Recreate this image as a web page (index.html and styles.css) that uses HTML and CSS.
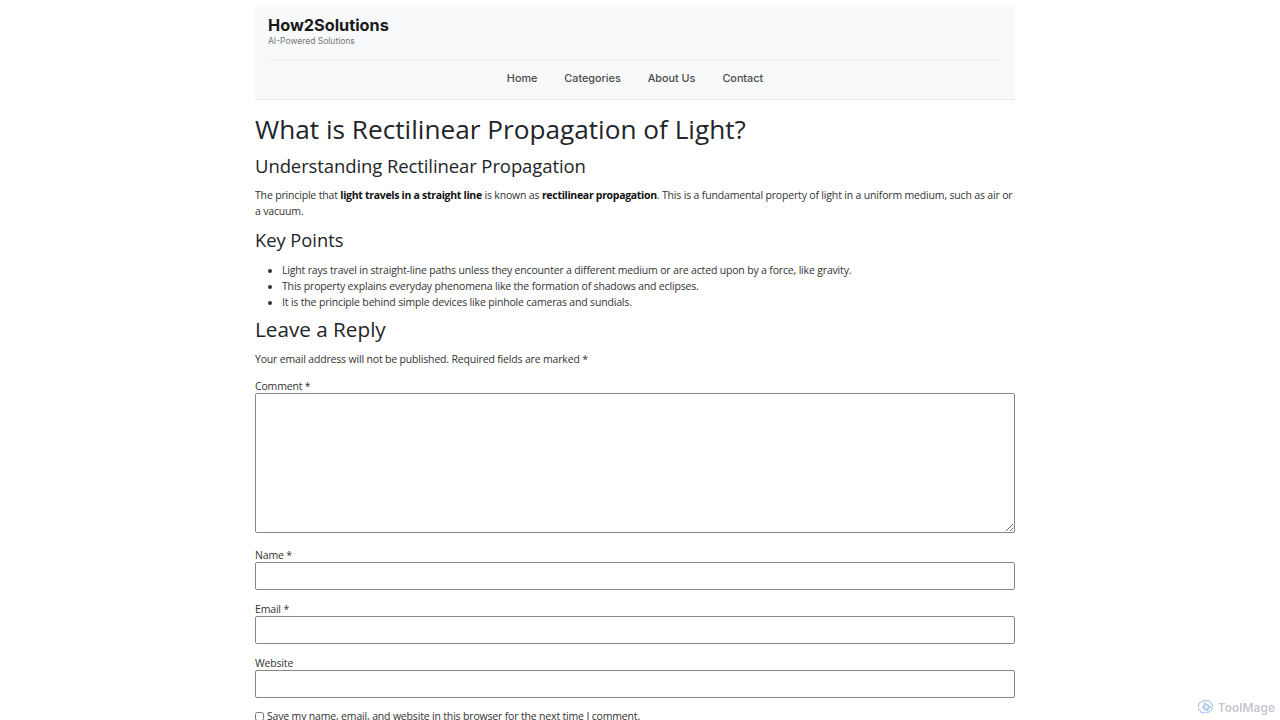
FILE: index.html
```html
<!DOCTYPE html>
<html lang="en">
<head>
  <meta charset="UTF-8" />
  <title>What is Rectilinear Propagation of Light? - How2Solutions</title>
  <meta name="viewport" content="width=device-width, initial-scale=1.0" />
  <link rel="stylesheet" href="styles.css">
</head>
<body>
  <div class="page">
    <header class="site-header">
      <div class="brand">
        <div class="site-title">How2Solutions</div>
        <div class="site-tagline">AI-Powered Solutions</div>
      </div>
      <nav class="main-nav">
        <a href="#">Home</a>
        <a href="#">Categories</a>
        <a href="#">About Us</a>
        <a href="#">Contact</a>
      </nav>
    </header>

    <article class="post">
      <h1>What is Rectilinear Propagation of Light?</h1>
      <h2>Understanding Rectilinear Propagation</h2>
      <p>The principle that <strong>light travels in a straight line</strong> is known as <strong>rectilinear propagation</strong>. This is a fundamental property of light in a uniform medium, such as air or a vacuum.</p>
      <h3>Key Points</h3>
      <ul>
        <li>Light rays travel in straight-line paths unless they encounter a different medium or are acted upon by a force, like gravity.</li>
        <li>This property explains everyday phenomena like the formation of shadows and eclipses.</li>
        <li>It is the principle behind simple devices like pinhole cameras and sundials.</li>
      </ul>
    </article>

    <section class="comments">
      <h2 class="reply-title">Leave a Reply</h2>
      <p class="notes">Your email address will not be published. Required fields are marked *</p>
      <form class="comment-form">
        <div class="field">
          <label for="comment">Comment *</label>
          <textarea id="comment"></textarea>
        </div>
        <div class="field">
          <label for="author">Name *</label>
          <input id="author" type="text">
        </div>
        <div class="field">
          <label for="email">Email *</label>
          <input id="email" type="text">
        </div>
        <div class="field">
          <label for="url">Website</label>
          <input id="url" type="text">
        </div>
        <p class="cookies">
          <input id="cookies" type="checkbox">
          <label for="cookies">Save my name, email, and website in this browser for the next time I comment.</label>
        </p>
      </form>
    </section>
  </div>

  <div class="badge">
    <svg width="16" height="16" viewBox="0 0 24 24" fill="none" stroke="#a9c4ec" stroke-width="1.6" stroke-linejoin="round">
      <path d="M12 3.5a4 4 0 0 1 6.9 2.6 4 4 0 0 1 2 6.6 4 4 0 0 1-3.9 5.4 4 4 0 0 1-6.9 1.4 4 4 0 0 1-6.9-2.6 4 4 0 0 1-2-6.6 4 4 0 0 1 3.9-5.4A4 4 0 0 1 12 3.5z"/>
      <path d="M9 7.5v7.5l6.5 3.5M15 16.5V9L8.5 5.5M6.5 12l6.5-3.7 6.5 3.7-6.5 3.7z"/>
    </svg>
    <span>ToolMage</span>
  </div>
</body>
</html>
```

FILE: styles.css
```css
body {
  margin: 0;
  padding: 7px 10px 0 0;
  font-family: 'Open Sans', sans-serif;
  color: #212529;
  background: #fff;
}
.page {
  width: 760px;
  margin: 0 auto;
}

/* header */
.site-header {
  background: #f8f9fa;
  border-bottom: 1px solid #e9ecef;
  font-family: 'Inter', sans-serif;
}
.brand {
  margin: 0 13px;
  padding: 8px 0 12px;
  border-bottom: 1px solid #eceef0;
}
.site-title {
  font-size: 16.3px;
  font-weight: 700;
  color: #1a1a1a;
  line-height: 20px;
}
.site-tagline {
  font-size: 8.5px;
  color: #777;
  margin-top: 1px;
  line-height: 11px;
}
.main-nav {
  display: flex;
  justify-content: center;
  gap: 27px;
  padding: 11px 0 12px;
}
.main-nav a {
  font-size: 10.8px;
  font-weight: 500;
  color: #4a4a4a;
  text-decoration: none;
  line-height: 16px;
}

/* article */
.post h1 {
  font-size: 26.2px;
  font-weight: 500;
  margin: 12px 0 0;
  line-height: 34px;
}
.post h2 {
  font-size: 18.5px;
  font-weight: 500;
  letter-spacing: -0.1px;
  margin: 7px 0 0;
  line-height: 26px;
}
.post p, .post li, .notes, label {
  font-size: 10.5px;
  letter-spacing: -0.17px;
  line-height: 16px;
  color: #333;
}
.post p {
  margin: 8px 0 0;
}
.post strong {
  color: #111;
  letter-spacing: -0.3px;
}
.post h3 {
  font-size: 18.3px;
  font-weight: 500;
  margin: 8px 0 0;
  line-height: 26px;
}
.post ul {
  margin: 9px 0 0;
  padding-left: 27px;
}

/* comments */
.reply-title {
  font-size: 20.7px;
  font-weight: 500;
  margin: 4px 0 0;
  line-height: 30px;
}
.notes {
  margin: 7px 0 0;
}
.comment-form {
  margin-top: 13px;
}
.field {
  display: flex;
  flex-direction: column;
  margin-bottom: 13px;
}
.field label {
  line-height: 13px;
}
.field textarea, .field input {
  box-sizing: border-box;
  width: 760px;
  border: 1px solid #888;
  border-radius: 2px;
  font: inherit;
}
.field textarea {
  height: 140px;
  margin-bottom: 3px;
}
.field input {
  height: 28px;
}
.cookies {
  display: flex;
  align-items: center;
  gap: 3px;
  margin: -3px 0 0;
}
.cookies input {
  margin: 0;
  width: 9px;
  height: 9px;
}

/* corner badge */
.badge {
  position: fixed;
  right: 5px;
  bottom: 5px;
  display: flex;
  align-items: center;
  gap: 4px;
  font-family: 'Inter', sans-serif;
  font-size: 12px;
  font-weight: 600;
  color: #c3c7cd;
}
```
